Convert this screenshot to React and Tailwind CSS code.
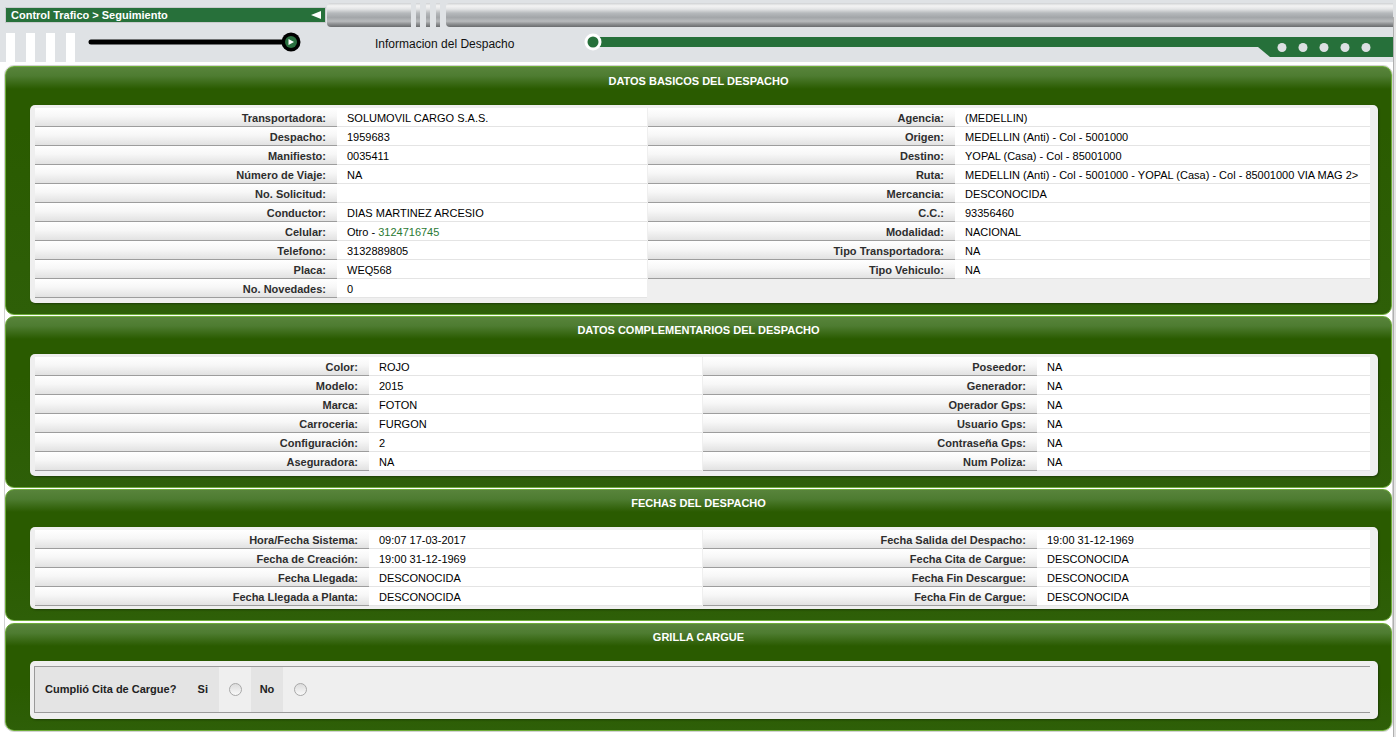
import React from 'react';

const metal =
  'bg-[linear-gradient(180deg,#cfd1d3_0%,#f4f4f4_12%,#e4e5e6_25%,#b6b9bc_42%,#a3a6a9_60%,#b8babc_76%,#8d8f91_88%,#6a6c6e_100%)]';

const basicLeft = [
  ['Transportadora:', 'SOLUMOVIL CARGO S.A.S.'],
  ['Despacho:', '1959683'],
  ['Manifiesto:', '0035411'],
  ['Número de Viaje:', 'NA'],
  ['No. Solicitud:', ''],
  ['Conductor:', 'DIAS MARTINEZ ARCESIO'],
  ['Celular:', 'CEL'],
  ['Telefono:', '3132889805'],
  ['Placa:', 'WEQ568'],
  ['No. Novedades:', '0'],
];

const basicRight = [
  ['Agencia:', '(MEDELLIN)'],
  ['Origen:', 'MEDELLIN (Anti) - Col - 5001000'],
  ['Destino:', 'YOPAL (Casa) - Col - 85001000'],
  ['Ruta:', 'MEDELLIN (Anti) - Col - 5001000 - YOPAL (Casa) - Col - 85001000 VIA MAG 2>'],
  ['Mercancia:', 'DESCONOCIDA'],
  ['C.C.:', '93356460'],
  ['Modalidad:', 'NACIONAL'],
  ['Tipo Transportadora:', 'NA'],
  ['Tipo Vehiculo:', 'NA'],
];

const compLeft = [
  ['Color:', 'ROJO'],
  ['Modelo:', '2015'],
  ['Marca:', 'FOTON'],
  ['Carroceria:', 'FURGON'],
  ['Configuración:', '2'],
  ['Aseguradora:', 'NA'],
];

const compRight = [
  ['Poseedor:', 'NA'],
  ['Generador:', 'NA'],
  ['Operador Gps:', 'NA'],
  ['Usuario Gps:', 'NA'],
  ['Contraseña Gps:', 'NA'],
  ['Num Poliza:', 'NA'],
];

const fechasLeft = [
  ['Hora/Fecha Sistema:', '09:07 17-03-2017'],
  ['Fecha de Creación:', '19:00 31-12-1969'],
  ['Fecha Llegada:', 'DESCONOCIDA'],
  ['Fecha Llegada a Planta:', 'DESCONOCIDA'],
];

const fechasRight = [
  ['Fecha Salida del Despacho:', '19:00 31-12-1969'],
  ['Fecha Cita de Cargue:', 'DESCONOCIDA'],
  ['Fecha Fin Descargue:', 'DESCONOCIDA'],
  ['Fecha Fin de Cargue:', 'DESCONOCIDA'],
];

const Row = ({ label, value, lw, vw }) => (
  <div className="flex h-[19px]">
    <div
      className={`${lw} flex items-center justify-end pt-[2px] pr-[11px] font-bold text-[#2e2e2e] border-b border-[#9d9d9d] bg-[linear-gradient(180deg,#ffffff_0%,#f7f7f7_45%,#e2e2e2_100%)]`}
    >
      {label}
    </div>
    <div className={`${vw} flex items-center pt-[2px] pl-[10px] bg-white border-b border-[#e4e4e4] text-black whitespace-nowrap`}>
      {value === 'CEL' ? (
        <span>
          Otro - <span className="text-[#2b7a33]">3124716745</span>
        </span>
      ) : (
        value
      )}
    </div>
  </div>
);

const Table = ({ rows, w, lw, vw }) => (
  <div className={`${w} flex flex-col`}>
    {rows.map(([l, v]) => (
      <Row key={l} label={l} value={v} lw={lw} vw={vw} />
    ))}
  </div>
);

const Panel = ({ title, children, first, mb = 'mb-[1px]', pb = 'pb-[5px]' }) => (
  <div
    className={`rounded-[9px] border border-[#6dac38] bg-[linear-gradient(180deg,#58843b_0px,#4e7c31_9px,#2a5b00_22px,#2a5b00_60px,#2e5f08_100%)] ${mb}`}
  >
    <div
      className={`${first ? 'h-[38px] pt-[7px]' : 'h-[37px] pt-[6px]'} text-center text-white font-bold text-[11px] leading-[14px]`}
    >
      {title}
    </div>
    <div className={`ml-[24px] mr-[13px] mb-[11px] rounded-[5px] bg-[#efefef] shadow-[1px_1px_2px_rgba(0,0,0,0.35)] pl-[5px] pr-[8px] pt-[3px] ${pb}`}>
      {children}
    </div>
  </div>
);

const Radio = () => (
  <span className="block w-[13px] h-[13px] rounded-full border border-[#a8a8a8] bg-[linear-gradient(180deg,#dcdcdc,#f9f9f9)]" />
);

export default function App() {
  return (
    <div className="w-[1396px] h-[737px] overflow-hidden bg-white flex font-['Liberation_Sans',Arial,sans-serif] text-[11px] leading-none">
      <div className="w-[1393px] flex flex-col">
        {/* top header */}
        <div className="h-[62px] bg-[#dfe2e5] flex flex-col">
          <div className="h-[28px] flex items-start">
            <div className="mt-[7px] ml-[5px] w-[321px] h-[16px] bg-[#27703a] border border-[#c9cbcd] flex items-center justify-between pl-[5px] pr-[4px]">
              <span className="text-white font-bold text-[11px]">Control Trafico &gt; Seguimiento</span>
              <svg width="10" height="8" viewBox="0 0 10 8">
                <polygon points="0,4 10,0 10,8" fill="#ffffff" />
              </svg>
            </div>
            <div className={`mt-[3px] ml-[1px] h-[24px] w-[84px] rounded-l-[4px] ${metal}`} />
            <div className={`mt-[3px] ml-[5px] h-[24px] w-[4px] ${metal}`} />
            <div className={`mt-[3px] ml-[6px] h-[24px] w-[4px] ${metal}`} />
            <div className={`mt-[3px] ml-[6px] h-[24px] w-[4px] ${metal}`} />
            <div className={`mt-[3px] ml-[6px] h-[24px] flex-1 rounded-l-[4px] ${metal}`} />
          </div>
          <div className="h-[34px] flex items-start">
            <div className="flex gap-[11px] pl-[6px] pt-[5px]">
              <div className="w-[9px] h-[29px] bg-white" />
              <div className="w-[9px] h-[29px] bg-white" />
              <div className="w-[9px] h-[29px] bg-white" />
              <div className="w-[9px] h-[29px] bg-white" />
            </div>
            <svg width="225" height="34" viewBox="0 0 225 34" className="ml-[5px]">
              <line x1="11" y1="14" x2="205" y2="14" stroke="#000" strokeWidth="5" strokeLinecap="round" />
              <circle cx="211" cy="14" r="9.5" fill="#000" />
              <circle cx="211" cy="14" r="6" fill="#2a7040" />
              <polygon points="208.5,11 208.5,17 214,14" fill="#fff" />
            </svg>
            <div className="ml-[70px] mt-[10px] text-[12px] text-[#111] leading-[12px]">Informacion del Despacho</div>
            <svg width="809" height="34" viewBox="0 0 809 34" className="ml-auto">
              <rect x="9" y="9" width="800" height="10" fill="#26703a" />
              <polygon points="674,19 686,29 809,29 809,19" fill="#26703a" />
              <circle cx="9" cy="14" r="8.5" fill="#ffffff" />
              <circle cx="9" cy="14" r="5.5" fill="#26703a" />
              {[698, 719, 740, 761, 782].map((x) => (
                <circle key={x} cx={x} cy="19.5" r="4.5" fill="#dde0e3" />
              ))}
            </svg>
          </div>
        </div>

        {/* content */}
        <div className="mt-[3px] ml-[4px] border border-[#d2d2d2] rounded-[10px] bg-white">
          <Panel title="DATOS BASICOS DEL DESPACHO" first>
            <div className="flex gap-[1px]">
              <Table rows={basicLeft} w="w-[612px]" lw="w-[302px]" vw="w-[310px]" />
              <Table rows={basicRight} w="w-[722px]" lw="w-[307px]" vw="w-[415px]" />
            </div>
          </Panel>
          <Panel title="DATOS COMPLEMENTARIOS DEL DESPACHO">
            <div className="flex gap-[1px]">
              <Table rows={compLeft} w="w-[667px]" lw="w-[334px]" vw="w-[333px]" />
              <Table rows={compRight} w="w-[667px]" lw="w-[334px]" vw="w-[333px]" />
            </div>
          </Panel>
          <Panel title="FECHAS DEL DESPACHO" pb="pb-[3px]" mb="mb-[2px]">
            <div className="flex gap-[1px]">
              <Table rows={fechasLeft} w="w-[667px]" lw="w-[334px]" vw="w-[333px]" />
              <Table rows={fechasRight} w="w-[667px]" lw="w-[334px]" vw="w-[333px]" />
            </div>
          </Panel>
          <Panel title="GRILLA CARGUE" mb="mb-0" pb="pb-[4px]">
            <div className="pt-[2px] pb-[2px] -ml-[1px]">
              <div className="flex h-[47px] border-t border-b border-l border-[#9a9a9a] bg-[#efefef]">
                <div className="w-[184px] flex items-center justify-between pl-[10px] pr-[11px] bg-[#e4e4e4] font-bold text-[#222]">
                  <span>Cumplió Cita de Cargue?</span>
                  <span>Si</span>
                </div>
                <div className="w-[32px] flex items-center justify-center">
                  <Radio />
                </div>
                <div className="w-[32px] flex items-center justify-center bg-[#e4e4e4] font-bold text-[#222]">No</div>
                <div className="w-[34px] flex items-center justify-center">
                  <Radio />
                </div>
                <div className="flex-1" />
              </div>
            </div>
          </Panel>
        </div>
      </div>
      <div className="w-[3px] flex flex-col">
        <div className="h-[17px] bg-[#e1e3e5]" />
        <div className="flex-1 bg-[#e3e3e3] border-l border-[#b0b0b0]" />
      </div>
    </div>
  );
}
